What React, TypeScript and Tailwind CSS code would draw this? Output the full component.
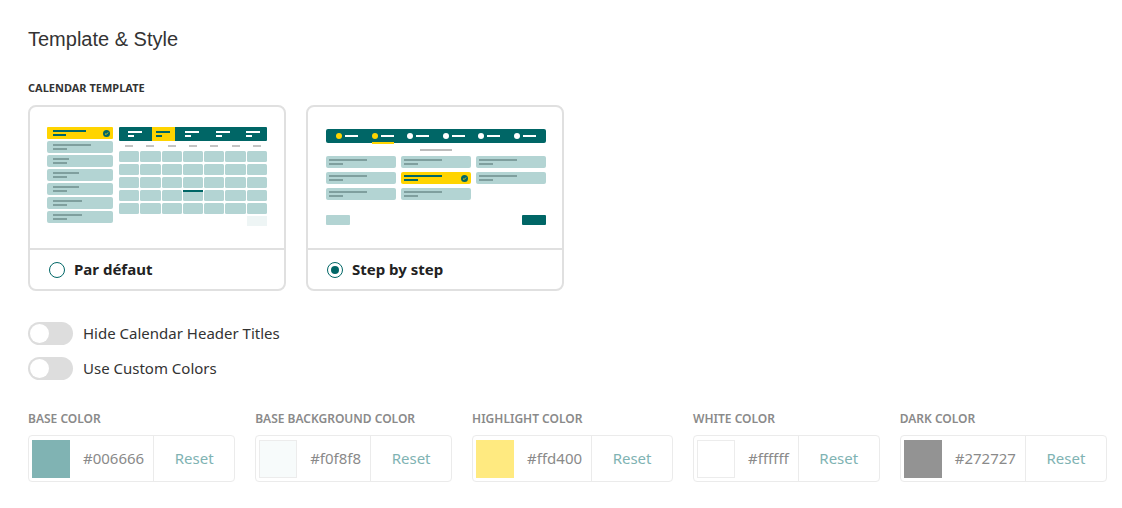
import React from "react";

const TEAL = "#006666";
const CELL = "bg-[#b3d4d3]";

function Check() {
  return (
    <svg width="7" height="7" viewBox="0 0 7 7">
      <circle cx="3.5" cy="3.5" r="3.5" fill={TEAL} />
      <path d="M2 3.6 L3.1 4.6 L5 2.5" stroke="#ffd400" strokeWidth="0.9" fill="none" />
    </svg>
  );
}

function DefaultPreview() {
  const rows = [38, 16, 26, 26, 29, 29];
  return (
    <div className="flex gap-[6px] pl-[17px] pt-[20px]">
      <div className="flex w-[66px] flex-col gap-[2px]">
        <div className="flex h-[12px] items-center justify-between rounded-[1px] bg-[#ffd400] pl-[6px] pr-[3px]">
          <div className="flex flex-col gap-[2px]">
            <div className="h-[2px] w-[33px] bg-[#006666]" />
            <div className="h-[2px] w-[13px] bg-[#006666]" />
          </div>
          <Check />
        </div>
        {rows.map((w, i) => (
          <div key={i} className={`flex h-[12px] flex-col justify-center gap-[2px] rounded-[2px] ${CELL} pl-[6px]`}>
            <div className="h-[2px] bg-[#7f9f9e]" style={{ width: w }} />
            <div className="h-[2px] w-[14px] bg-[#7f9f9e]" />
          </div>
        ))}
      </div>
      <div className="flex w-[148px] flex-col">
        <div className="flex h-[14px] rounded-[1px] bg-[#006666]">
          {[0, 1, 2, 3, 4].map((i) => (
            <div
              key={i}
              className={`flex flex-col justify-center gap-[2px] ${i === 1 ? "w-[23px] bg-[#ffd400] pl-[4px]" : i === 0 ? "w-[33px] pl-[9px]" : "flex-1 pl-[10px]"}`}
            >
              <div className={`h-[2px] w-[14px] ${i === 1 ? "bg-[#006666]" : "bg-white"}`} />
              <div className={`h-[2px] w-[6px] ${i === 1 ? "bg-[#006666]" : "bg-white"}`} />
            </div>
          ))}
        </div>
        <div className="grid grid-cols-7 gap-x-[1px] py-[4px]">
          {[0, 1, 2, 3, 4, 5, 6].map((i) => (
            <div key={i} className="flex justify-center">
              <div className="h-[2px] w-[8px] bg-[#c4c4c4]" />
            </div>
          ))}
        </div>
        <div className="grid grid-cols-7 gap-x-[1px] gap-y-[2px]">
          {Array.from({ length: 35 }).map((_, i) => (
            <div key={i} className={`relative h-[11px] rounded-[1.5px] ${CELL}`}>
              {i === 24 && <div className="absolute left-0 right-0 top-0 h-[2px] bg-[#006666]" />}
            </div>
          ))}
        </div>
        <div className="mt-[2px] flex justify-end">
          <div className="h-[10px] w-[20px] bg-[#eef5f5]" />
        </div>
      </div>
    </div>
  );
}

function StepPreview() {
  const grid = [
    [0, 0, 0],
    [0, 1, 0],
    [0, 0, -1],
  ];
  return (
    <div className="ml-[18px] flex w-[220px] flex-col pt-[22px]">
      <div className="flex h-[14px] items-center justify-between rounded-[2px] bg-[#006666] px-[10px]">
        {[0, 1, 2, 3, 4, 5].map((i) => (
          <div key={i} className="relative flex items-center gap-[3px]">
            <div className={`h-[6px] w-[6px] rounded-full ${i < 2 ? "bg-[#ffd400]" : "bg-white"}`} />
            <div className="h-[2px] w-[13px] bg-white" />
            {i === 1 && <div className="absolute -bottom-[5px] left-0 h-[2px] w-[22px] bg-[#ffd400]" />}
          </div>
        ))}
      </div>
      <div className="flex justify-center pb-[5px] pt-[6px]">
        <div className="h-[2px] w-[32px] bg-[#bcbcbc]" />
      </div>
      <div className="grid grid-cols-3 gap-x-[5px] gap-y-[4px]">
        {grid.flat().map((v, i) =>
          v === -1 ? (
            <div key={i} />
          ) : (
            <div
              key={i}
              className={`flex h-[12px] items-center justify-between rounded-[2px] pl-[3px] pr-[3px] ${v === 1 ? "bg-[#ffd400]" : CELL}`}
            >
              <div className="flex flex-col gap-[2px]">
                <div className={`h-[2px] w-[38px] ${v === 1 ? "bg-[#006666]" : "bg-[#7f9f9e]"}`} />
                <div className={`h-[2px] w-[14px] ${v === 1 ? "bg-[#006666]" : "bg-[#7f9f9e]"}`} />
              </div>
              {v === 1 && <Check />}
            </div>
          )
        )}
      </div>
      <div className="mt-[15px] flex justify-between">
        <div className={`h-[10px] w-[24px] rounded-[1px] ${CELL}`} />
        <div className="h-[10px] w-[24px] rounded-[1px] bg-[#006666]" />
      </div>
    </div>
  );
}

function Card({ label, selected, children }: { label: string; selected: boolean; children: React.ReactNode }) {
  return (
    <div className="flex h-[186px] w-[258px] flex-col rounded-[8px] border-2 border-[#e0e0e0] bg-white">
      <div className="h-[141px]">{children}</div>
      <div className="flex flex-1 items-center gap-[9px] border-t-2 border-[#e0e0e0] pl-[19px]">
        <div className="flex h-[16px] w-[16px] items-center justify-center rounded-full border-[1.5px] border-[#006666]">
          {selected && <div className="h-[8px] w-[8px] rounded-full bg-[#006666]" />}
        </div>
        <span className="text-[15px] font-bold text-[#222]">{label}</span>
      </div>
    </div>
  );
}

function Toggle({ label }: { label: string }) {
  return (
    <div className="flex items-center gap-[10px]">
      <div className="flex h-[23px] w-[45px] items-center rounded-full bg-[#dddddd] px-[2px]">
        <div className="h-[19px] w-[19px] rounded-full bg-white" />
      </div>
      <span className="text-[15px] text-[#333]">{label}</span>
    </div>
  );
}

function ColorField({ label, hex, swatch, bordered }: { label: string; hex: string; swatch: string; bordered?: boolean }) {
  return (
    <div className="flex flex-col">
      <div className="mb-[7px] text-[12px] font-semibold uppercase text-[#8a8a8a]">{label}</div>
      <div className="flex h-[47px] items-stretch rounded-[4px] border border-[#ebebeb] bg-white">
        <div className="flex items-center pl-[3px]">
          <div
            className={`h-[38px] w-[38px] ${bordered ? "border border-[#ececec]" : ""}`}
            style={{ backgroundColor: swatch }}
          />
        </div>
        <div className="flex items-center pl-[13px] pr-[9px] text-[15px] text-[#8a8a8a]">{hex}</div>
        <div className="flex w-[81px] items-center justify-center border-l border-[#ebebeb] text-[15px] text-[#80b3b3]">
          Reset
        </div>
      </div>
    </div>
  );
}

export default function App() {
  return (
    <div className="min-h-[508px] bg-white pl-[28px] pt-[27px]" style={{ fontFamily: '"Noto Sans", "Open Sans", sans-serif' }}>
      <h1 className="text-[20px] leading-[24px] text-[#333]" style={{ fontFamily: '"Liberation Sans", Arial, sans-serif' }}>
        Template &amp; Style
      </h1>
      <div className="mt-[30px] text-[11px] font-bold uppercase leading-[14px] text-[#333]">Calendar Template</div>
      <div className="mt-[10px] flex gap-[20px]">
        <Card label="Par défaut" selected={false}>
          <DefaultPreview />
        </Card>
        <Card label="Step by step" selected={true}>
          <StepPreview />
        </Card>
      </div>
      <div className="mt-[31px] flex flex-col gap-[12px]">
        <Toggle label="Hide Calendar Header Titles" />
        <Toggle label="Use Custom Colors" />
      </div>
      <div className="mt-[30px] flex gap-[20px]">
        <ColorField label="Base Color" hex="#006666" swatch="#80b3b3" />
        <ColorField label="Base Background Color" hex="#f0f8f8" swatch="#f7fbfb" bordered />
        <ColorField label="Highlight Color" hex="#ffd400" swatch="#ffea80" />
        <ColorField label="White Color" hex="#ffffff" swatch="#ffffff" bordered />
        <ColorField label="Dark Color" hex="#272727" swatch="#939393" />
      </div>
    </div>
  );
}
